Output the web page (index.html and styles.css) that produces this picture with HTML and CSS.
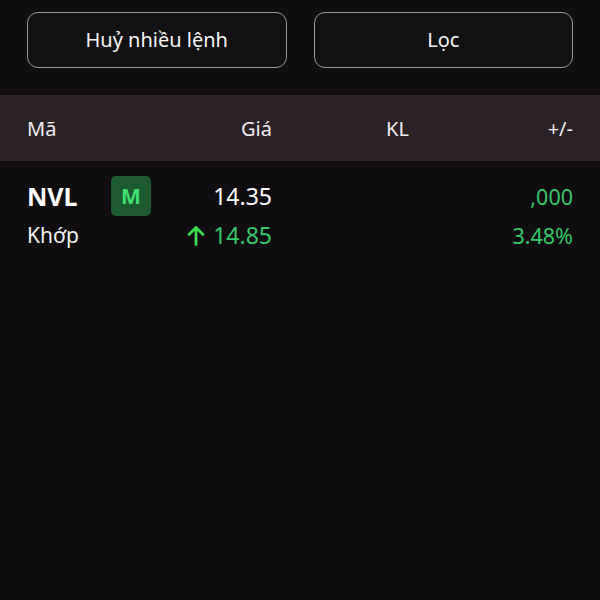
FILE: index.html
```html
<!DOCTYPE html>
<html lang="vi">
<head>
<meta charset="utf-8">
<link rel="stylesheet" href="styles.css">
</head>
<body>
<div class="screen">
  <div class="actions">
    <button class="btn">Huỷ nhiều lệnh</button>
    <button class="btn">Lọc</button>
  </div>
  <div class="thead grid">
    <div class="c1">Mã</div>
    <div class="c2 right">Giá</div>
    <div class="c4">KL</div>
    <div class="c4 right">+/-</div>
  </div>
  <div class="order">
    <div class="grid row1">
      <div class="c1 sym">NVL</div>
      <div class="c2 pricecell">
        <span class="badge">M</span>
        <span class="price">14.35</span>
      </div>
      <div class="c4 right green">,000</div>
    </div>
    <div class="grid row2">
      <div class="c1 status">Khớp</div>
      <div class="c2 right match">
        <svg class="arrow" width="18" height="21" viewBox="0 0 18 21"><path d="M9 19.5V2.5M2 9.5l7-7 7 7" fill="none" stroke="#3ddc4f" stroke-width="2.8" stroke-linecap="round" stroke-linejoin="round"/></svg>
        <span>14.85</span>
      </div>
      <div class="c4 right green">3.48%</div>
    </div>
  </div>
</div>
</body>
</html>
```

FILE: styles.css
```css
* { box-sizing: border-box; }
html, body { margin: 0; padding: 0; background: #0f0d10; }
body {
  width: 600px;
  height: 600px;
  overflow: hidden;
  font-family: "Noto Sans", "Open Sans", sans-serif;
  color: #f2f2f2;
}
.screen { display: flex; flex-direction: column; }
.actions {
  display: flex;
  gap: 27px;
  padding: 12px 27px 0 27px;
  height: 95px;
}
.btn {
  flex: 1;
  height: 56px;
  padding-bottom: 2px;
  background: #111012;
  border: 1.5px solid #9a989a;
  border-radius: 11px;
  color: #f6f6f6;
  font-family: inherit;
  font-size: 20px;
}
.grid {
  display: grid;
  grid-template-columns: 84px 161px 114px 1fr;
  padding: 0 27px;
  align-items: center;
}
.c1 { grid-column: 1; grid-row: 1; }
.c2 { grid-column: 2; grid-row: 1; }
.c4 { grid-column: 4; grid-row: 1; }
.right { justify-self: end; }
.thead {
  height: 66px;
  background: #2a2226;
  font-size: 20px;
  color: #f0ecef;
}
.order { padding-top: 14px; }
.row1 { height: 42px; }
.row2 { height: 36px; }
.sym { font-size: 25px; font-weight: 700; color: #ffffff; }
.pricecell { display: flex; justify-content: space-between; align-items: center; }
.badge {
  width: 40px;
  height: 40px;
  border-radius: 5px;
  background: #1e5a2f;
  color: #3ee06e;
  font-weight: 700;
  font-size: 21px;
  display: flex;
  align-items: center;
  justify-content: center;
}
.price { font-size: 23px; color: #ffffff; }
.status { font-size: 21px; color: #f2f2f2; }
.green { color: #35c968; font-size: 21.5px; }
.match { display: flex; align-items: center; gap: 8px; color: #35c968; font-size: 23px; }
.arrow { display: block; }
```
